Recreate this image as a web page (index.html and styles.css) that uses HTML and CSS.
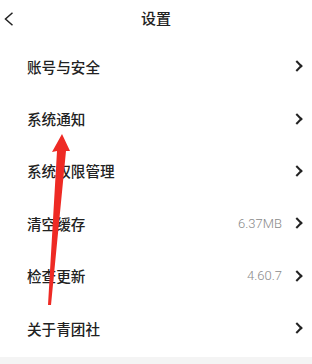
FILE: index.html
```html
<!DOCTYPE html>
<html lang="zh-CN">
<head>
    <meta charset="UTF-8">
    <meta name="viewport" content="width=device-width, initial-scale=1.0">
    <title>设置</title>
    <link rel="stylesheet" href="styles.css">
</head>
<body>
    <div class="page">
        <div class="header">
            <svg class="back" width="11" height="14" viewBox="0 0 11 14">
                <path d="M9.5 0.8 L2.5 7 L9.5 13.2" fill="none" stroke="#222" stroke-width="1.5"/>
            </svg>
            <div class="title">设置</div>
        </div>

        <div class="list">
            <div class="row">
                <span class="label">账号与安全</span>
                <span class="chevron"></span>
            </div>
            <div class="row">
                <span class="label">系统通知</span>
                <span class="chevron"></span>
            </div>
            <div class="row">
                <span class="label">系统权限管理</span>
                <span class="chevron"></span>
            </div>
            <div class="row">
                <span class="label">清空缓存</span>
                <span class="value">6.37MB</span>
                <span class="chevron"></span>
            </div>
            <div class="row">
                <span class="label">检查更新</span>
                <span class="value">4.60.7</span>
                <span class="chevron"></span>
            </div>
            <div class="row">
                <span class="label">关于青团社</span>
                <span class="chevron"></span>
            </div>
        </div>

        <div class="footer"></div>

        <!-- red annotation arrow over the list -->
        <svg class="mark" width="312" height="364" viewBox="0 0 312 364">
            <polygon fill="#ee2a24" points="62,134 70,151 66,151 51,305 48,305 57,151 52,152"/>
        </svg>
    </div>
</body>
</html>
```

FILE: styles.css
```css
* {
    box-sizing: border-box;
}

body {
    margin: 0;
    background: #fff;
    font-family: "Noto Sans CJK SC", "Noto Sans", sans-serif;
    color: #222;
}

.page {
    position: relative;
    width: 312px;
    height: 364px;
    overflow: hidden;
}

.header {
    position: relative;
    height: 36px;
    display: flex;
    align-items: center;
    justify-content: center;
}

.back {
    position: absolute;
    left: 3px;
    top: 12px;
}

.title {
    font-size: 15px;
    font-weight: 500;
    margin-top: -1px;
}

.list {
    padding-top: 4px;
}

.row {
    height: 52.4px;
    display: flex;
    align-items: center;
    padding: 0 9px 0 27px;
}

.label {
    flex: 1;
    font-size: 14.6px;
    font-weight: 500;
}

.value {
    font-family: Roboto, "Noto Sans", sans-serif;
    font-weight: 300;
    font-size: 13px;
    color: #8a8a8a;
    margin-right: 11px;
}

.chevron {
    width: 8px;
    height: 8px;
    border-top: 2px solid #222;
    border-right: 2px solid #222;
    transform: rotate(45deg);
    margin-right: 2px;
}

.footer {
    height: 10px;
    margin-top: 3px;
    background: #f4f4f4;
}

.mark {
    position: absolute;
    left: 0;
    top: 0;
}
```
